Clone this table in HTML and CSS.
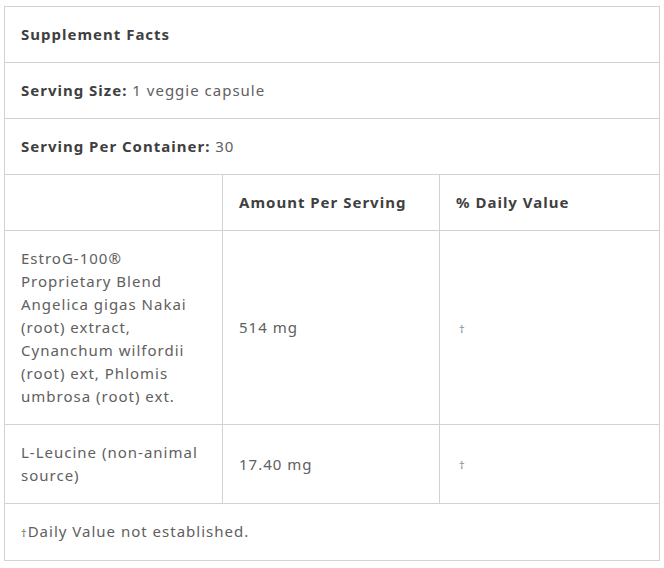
FILE: index.html
```html
<!DOCTYPE html>
<html lang="en">
<head>
<meta charset="utf-8">
<title>Supplement Facts</title>
<link rel="stylesheet" href="styles.css">
</head>
<body>
<table class="facts">
  <colgroup>
    <col class="c1"><col class="c2"><col class="c3">
  </colgroup>
  <tr><td colspan="3"><strong>Supplement Facts</strong></td></tr>
  <tr><td colspan="3"><strong>Serving Size:</strong> 1 veggie capsule</td></tr>
  <tr><td colspan="3"><strong>Serving Per Container:</strong> 30</td></tr>
  <tr><td></td><td><strong>Amount Per Serving</strong></td><td><strong>% Daily Value</strong></td></tr>
  <tr>
    <td>EstroG-100® Proprietary Blend Angelica gigas Nakai (root) extract, Cynanchum wilfordii (root) ext, Phlomis umbrosa (root) ext.</td>
    <td>514 mg</td>
    <td><span class="dag">†</span></td>
  </tr>
  <tr>
    <td>L-Leucine (non-animal source)</td>
    <td>17.40 mg</td>
    <td><span class="dag">†</span></td>
  </tr>
  <tr><td colspan="3"><span class="dag small">†</span>Daily Value not established.</td></tr>
</table>
</body>
</html>
```
FILE: styles.css
```css
html, body { background: #fff; }
body {
  margin: 0;
  padding: 6px 0 0 4px;
  font-family: "Noto Sans", "Open Sans", sans-serif;
  font-size: 15px;
  letter-spacing: 1px;
  color: #606060;
}
.facts {
  width: 655px;
  border-collapse: collapse;
  table-layout: fixed;
}
.c1 { width: 218px; }
.c2 { width: 217px; }
.c3 { width: 220px; }
.facts td {
  border: 1px solid #d2d2d2;
  padding: 16px;
  line-height: 23px;
  vertical-align: middle;
}
.facts strong {
  font-weight: 700;
  color: #3f3f3f;
  font-size: 15px;
  letter-spacing: 1px;
}
.dag {
  font-size: 11px;
  color: #7a8a9c;
  letter-spacing: 0;
  margin-left: 3px;
}
.dag.small { color: #6a6a6a; margin: 0 1px 0 0; }
```
